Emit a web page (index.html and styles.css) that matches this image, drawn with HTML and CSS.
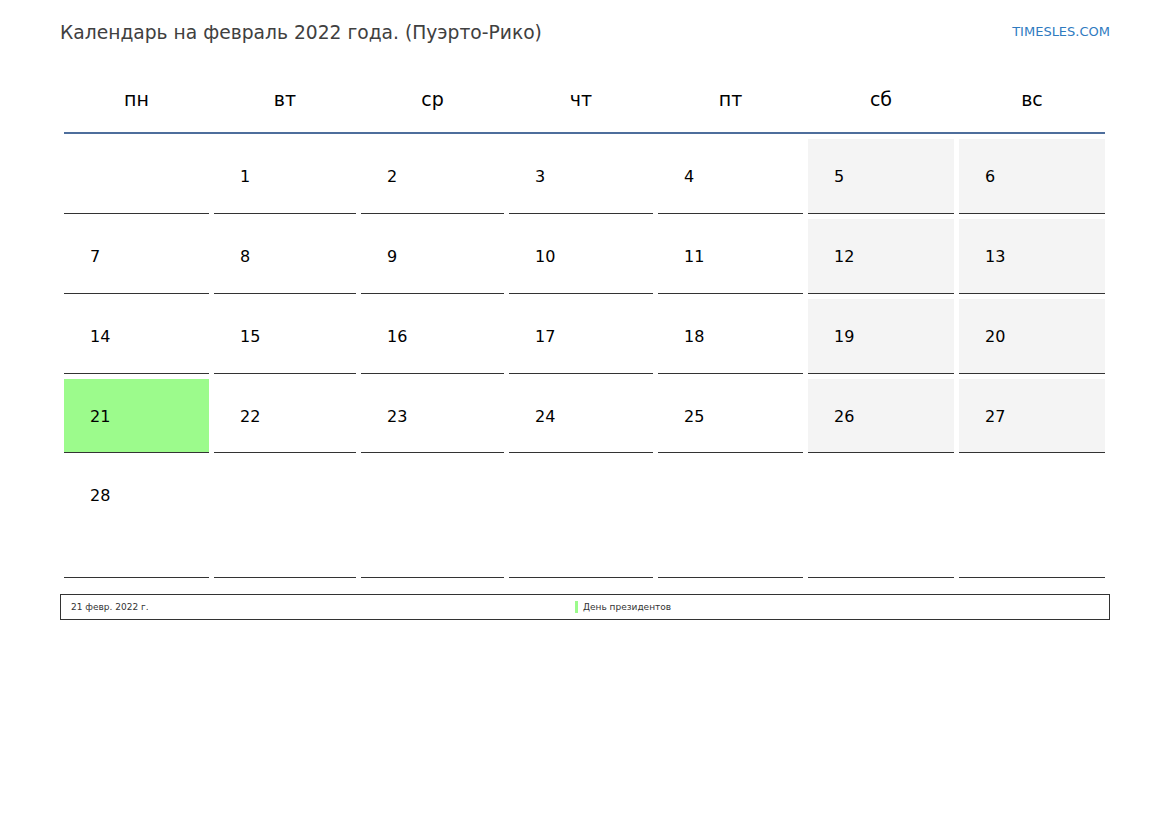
FILE: index.html
```html
<!DOCTYPE html>
<html lang="ru">
<head>
<meta charset="utf-8">
<title>Календарь на февраль 2022 года. (Пуэрто-Рико)</title>
<link rel="stylesheet" href="styles.css">
</head>
<body>
<div class="page">
  <div class="top">
    <h1 class="title">Календарь на февраль 2022 года. (Пуэрто-Рико)</h1>
    <a class="site">TIMESLES.COM</a>
  </div>
  <div class="cal">
    <div class="dow">пн</div><div class="dow">вт</div><div class="dow">ср</div><div class="dow">чт</div><div class="dow">пт</div><div class="dow">сб</div><div class="dow">вс</div>

    <div class="day"></div><div class="day">1</div><div class="day">2</div><div class="day">3</div><div class="day">4</div><div class="day we">5</div><div class="day we">6</div>
    <div class="day">7</div><div class="day">8</div><div class="day">9</div><div class="day">10</div><div class="day">11</div><div class="day we">12</div><div class="day we">13</div>
    <div class="day">14</div><div class="day">15</div><div class="day">16</div><div class="day">17</div><div class="day">18</div><div class="day we">19</div><div class="day we">20</div>
    <div class="day hol">21</div><div class="day">22</div><div class="day">23</div><div class="day">24</div><div class="day">25</div><div class="day we">26</div><div class="day we">27</div>
    <div class="day">28</div><div class="day"></div><div class="day"></div><div class="day"></div><div class="day"></div><div class="day"></div><div class="day"></div>
  </div>
  <div class="legend">
    <div class="leg-date">21 февр. 2022 г.</div>
    <div class="leg-name"><span class="swatch"></span>День президентов</div>
  </div>
</div>
</body>
</html>
```
FILE: styles.css
```css
html, body {
  margin: 0;
  padding: 0;
  background: #ffffff;
}
body {
  font-family: "DejaVu Sans", "Liberation Sans", sans-serif;
  color: #000;
}
.page {
  width: 1050px;
  padding: 0 59px 0 60px;
}
.top {
  display: flex;
  justify-content: space-between;
  align-items: flex-start;
  padding-top: 21px;
  height: 45px;
  box-sizing: border-box;
}
.title {
  margin: 0;
  font-weight: normal;
  font-size: 18.7px;
  line-height: 24px;
  color: #404040;
}
.site {
  font-size: 13px;
  line-height: 22px;
  color: #2f7bbf;
  text-decoration: none;
}
.cal {
  margin: 21px 5px 0 4px;
  display: grid;
  grid-template-columns: 145px 142px 143px 144px 145px 146px 146px;
  column-gap: 5px;
  row-gap: 5px;
  grid-template-rows: 68px 75px 75px 75px 74px 120px;
}
.dow {
  font-size: 19px;
  text-align: center;
  line-height: 66px;
  border-bottom: 2px solid #4e6e9c;
  margin-right: -5px;
  padding-right: 5px;
}
.dow:nth-child(7) {
  margin-right: 0;
  padding-right: 0;
}
.day {
  border-bottom: 1px solid #333333;
  font-size: 16px;
  padding: 28px 0 0 26px;
  box-sizing: border-box;
}
.we {
  background: #f4f4f4;
}
.hol {
  background: #9cfb8c;
}
.legend {
  margin-top: 16px;
  height: 26px;
  box-sizing: border-box;
  border: 1px solid #333;
  display: flex;
  align-items: center;
  font-size: 9px;
  color: #333;
}
.leg-date {
  width: 504px;
  padding-left: 10px;
}
.leg-name {
  display: flex;
  align-items: center;
}
.swatch {
  display: inline-block;
  width: 3px;
  height: 12px;
  background: #9cfb8c;
  margin-right: 5px;
}
```
